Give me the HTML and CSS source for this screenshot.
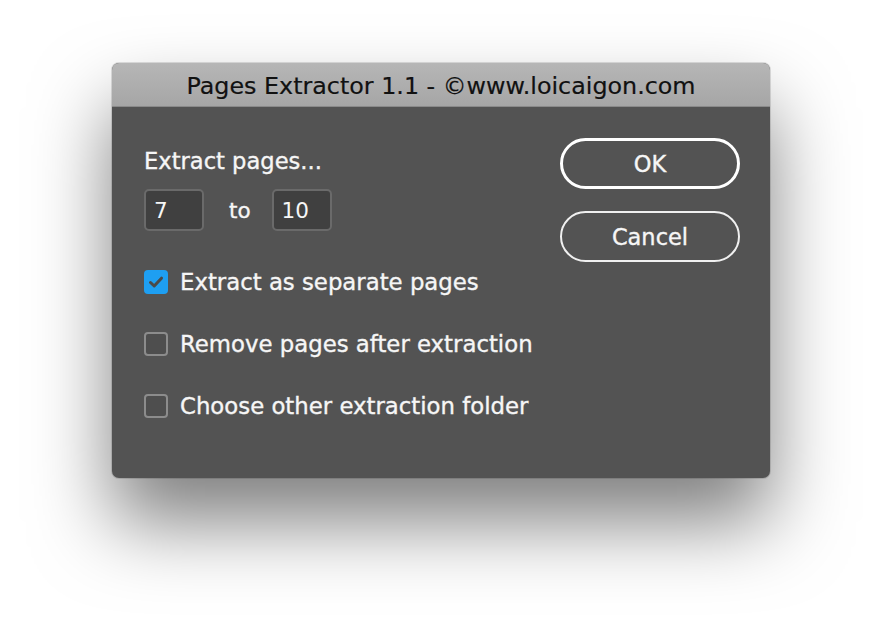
FILE: index.html
```html
<!DOCTYPE html>
<html>
<head>
<meta charset="utf-8">
<link rel="stylesheet" href="styles.css">
</head>
<body>
<div class="window">
  <div class="titlebar">Pages Extractor 1.1 - ©www.loicaigon.com</div>
  <div class="content">
    <div class="left">
      <div class="heading">Extract pages...</div>
      <div class="range">
        <div class="field">7</div>
        <span class="to">to</span>
        <div class="field">10</div>
      </div>
      <div class="checks">
        <div class="check"><span class="box checked"><svg viewBox="0 0 24 24" width="24" height="24"><path d="M6.5 12.5 L10.2 16 L17.5 8.2" fill="none" stroke="#4a4a4a" stroke-width="3" stroke-linecap="round" stroke-linejoin="round"/></svg></span><span>Extract as separate pages</span></div>
        <div class="check"><span class="box"></span><span>Remove pages after extraction</span></div>
        <div class="check"><span class="box"></span><span>Choose other extraction folder</span></div>
      </div>
    </div>
    <div class="right">
      <div class="btn ok">OK</div>
      <div class="btn cancel">Cancel</div>
    </div>
  </div>
</div>
</body>
</html>
```
FILE: styles.css
```css
html, body {
  margin: 0;
  padding: 0;
  background: #ffffff;
  width: 882px;
  height: 638px;
  overflow: hidden;
}
body {
  font-family: "DejaVu Sans", "Open Sans", sans-serif;
  padding-top: 63px;
  padding-left: 112px;
  box-sizing: border-box;
}
.window {
  width: 658px;
  height: 415px;
  background: #535353;
  border-radius: 7px;
  box-shadow: 0 44px 78px rgba(0,0,0,0.5), 0 0 0 1px rgba(0,0,0,0.12);
  overflow: hidden;
  display: flex;
  flex-direction: column;
}
.titlebar {
  height: 44px;
  box-sizing: border-box;
  background: linear-gradient(#b6b6b6, #a6a6a6);
  border-bottom: 1px solid #8a8a8a;
  color: #111;
  font-size: 23.8px;
  text-align: center;
  line-height: 47px;
  -webkit-text-stroke: 0.2px #111;
}
.content {
  display: flex;
  justify-content: space-between;
  padding: 31px 30px 0 32px;
}
.left {
  display: flex;
  flex-direction: column;
  margin-top: 10px;
}
.heading {
  color: #f6f6f6;
  font-size: 22.6px;
  line-height: 27px;
  -webkit-text-stroke: 0.35px #f6f6f6;
}
.range {
  display: flex;
  align-items: center;
  margin-top: 14px;
  color: #f6f6f6;
  font-size: 21.5px;
}
.field {
  width: 60px;
  height: 42px;
  box-sizing: border-box;
  border: 2px solid #6a6a6a;
  border-radius: 5px;
  background: #404040;
  padding-left: 8px;
  line-height: 39px;
  color: #f6f6f6;
}
.to {
  margin: 0 21px 0 25px;
  -webkit-text-stroke: 0.35px #f6f6f6;
}
.checks {
  display: flex;
  flex-direction: column;
  gap: 38px;
  margin-top: 39px;
}
.check {
  display: flex;
  align-items: center;
  gap: 12px;
  height: 24px;
  color: #f6f6f6;
  font-size: 22.8px;
  -webkit-text-stroke: 0.35px #f6f6f6;
}
.box {
  width: 24px;
  height: 24px;
  box-sizing: border-box;
  border: 2px solid #8c8c8c;
  border-radius: 4px;
  background: #4e4e4e;
  display: flex;
  align-items: center;
  justify-content: center;
}
.box.checked {
  border: none;
  background: #1e9ff2;
}
.right {
  display: flex;
  flex-direction: column;
  gap: 22px;
}
.btn {
  width: 180px;
  height: 51px;
  box-sizing: border-box;
  border-radius: 26px;
  color: #f6f6f6;
  font-size: 22.5px;
  display: flex;
  align-items: center;
  justify-content: center;
  -webkit-text-stroke: 0.35px #f6f6f6;
}
.btn.ok {
  border: 3px solid #ffffff;
}
.btn.cancel {
  border: 2px solid #f0f0f0;
}
```
